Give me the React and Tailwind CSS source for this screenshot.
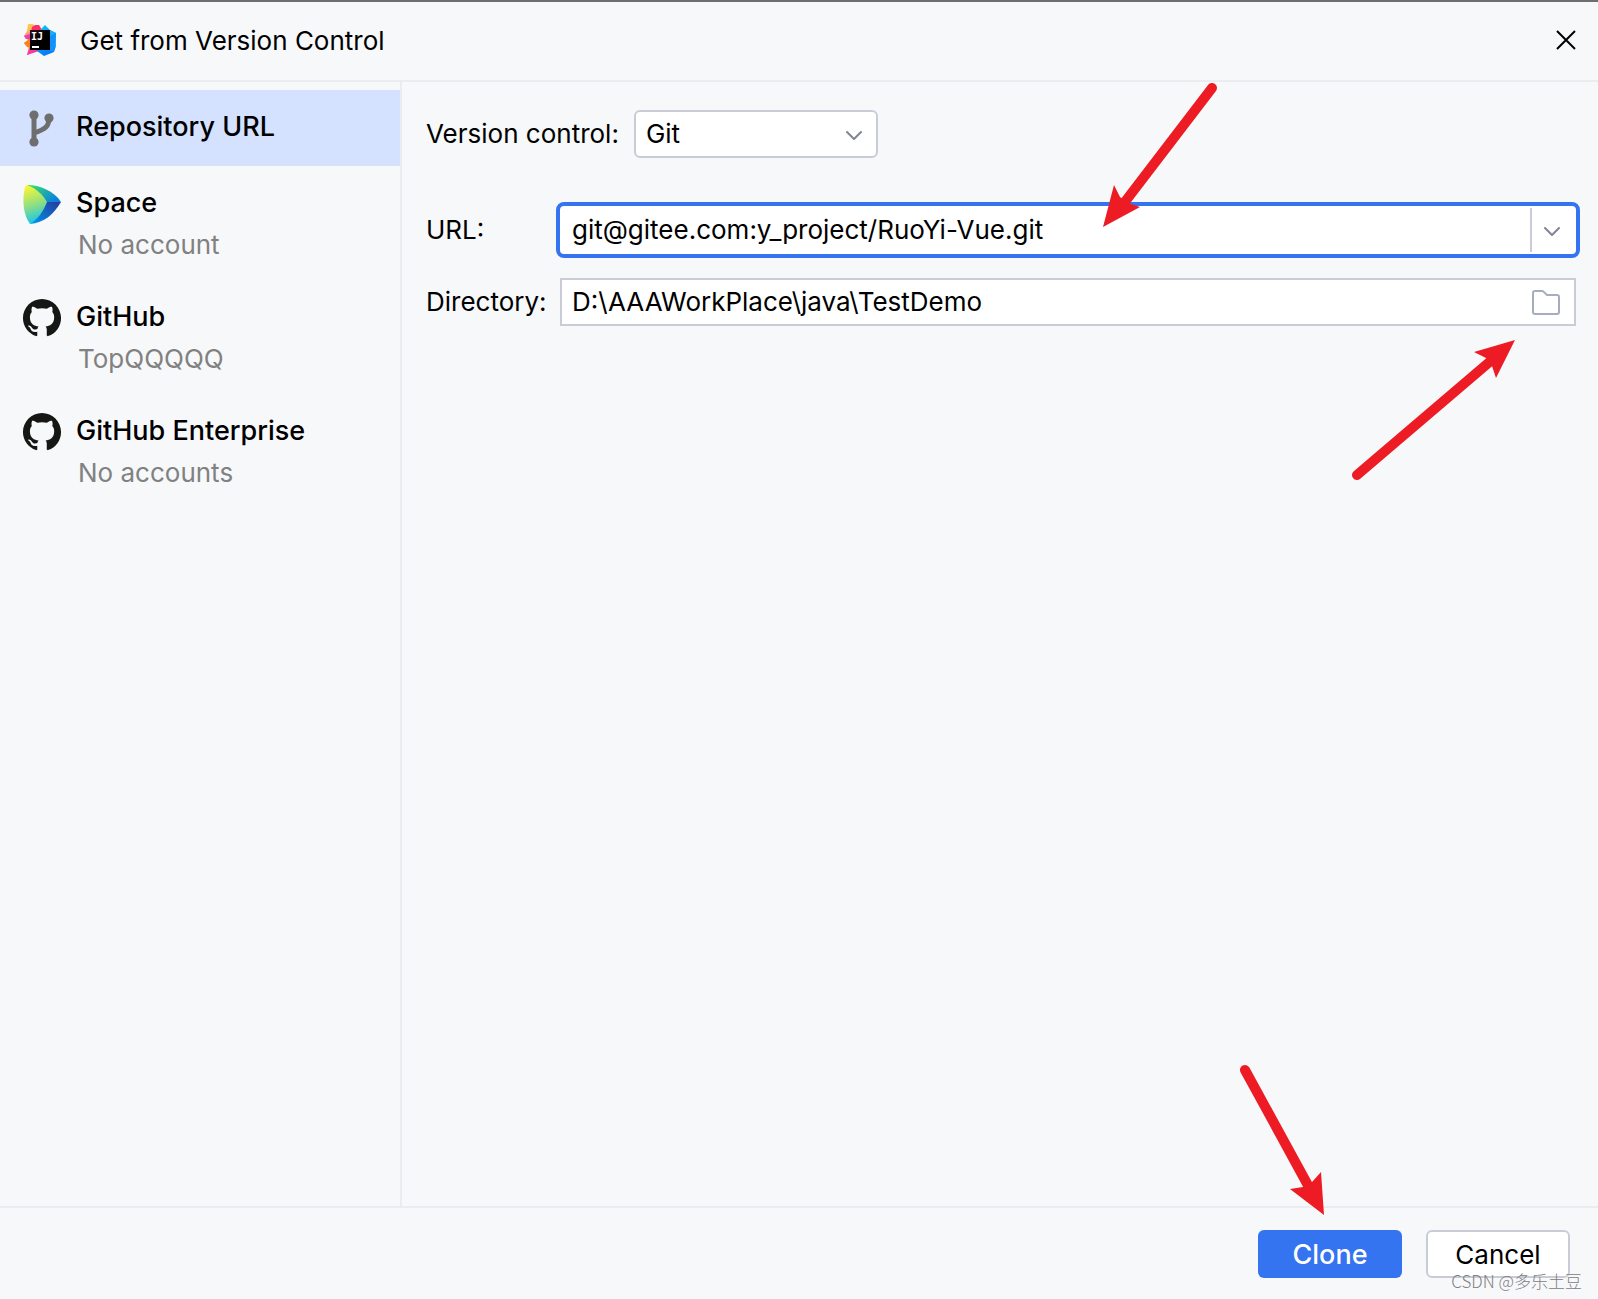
import React, { useState } from 'react';
import clsx from 'clsx';

function IdeaLogo() {
  return (
    <svg className="h-8 w-8 shrink-0" viewBox="0 0 32 32" aria-hidden="true">
      <defs>
        <linearGradient id="idea-warm" x1="0" y1="0" x2="0.3" y2="1">
          <stop offset="0" stopColor="#fcd84a" />
          <stop offset="0.3" stopColor="#fbb45c" />
          <stop offset="0.45" stopColor="#f765c8" />
          <stop offset="0.65" stopColor="#fd8224" />
          <stop offset="1" stopColor="#fe2f9c" />
        </linearGradient>
        <linearGradient id="idea-cool" x1="0" y1="0" x2="0.4" y2="1">
          <stop offset="0" stopColor="#10c4f8" />
          <stop offset="1" stopColor="#087cf8" />
        </linearGradient>
        <linearGradient id="idea-box" x1="0" y1="0" x2="1" y2="1">
          <stop offset="0" stopColor="#2a0f14" />
          <stop offset="0.5" stopColor="#000000" />
        </linearGradient>
      </defs>
      <path fill="url(#idea-warm)" d="M4 0h5l6 7v20L3 31l2-8-5-4 4-3-4-4 3-5z" />
      <path fill="#fe2d64" d="M8 3l3-2h4l3 5-1 3H7z" />
      <path fill="#f43ba8" d="M0 12l6-2v5H2z" />
      <path fill="#fc801d" d="M0 19l6-4v9l-3-1z" />
      <path fill="url(#idea-cool)" d="M16 6l5-5 5 5 6 3v13l-2 6-10 4-7-5z" />
      <path fill="#0bb5f5" d="M26 6l6 3v13l-6 4z" />
      <path fill="#1590fa" d="M26 12l6-3-2 19-6-2z" />
      <path fill="#f43ba8" d="M6 26h7l-10 5z" />
      <path fill="url(#idea-box)" d="M6 6h20v20H6z" />
      <text x="7" y="16" fill="#fff" fontFamily="'DejaVu Sans Mono', monospace" fontWeight="700" fontSize="10">IJ</text>
      <path fill="#fff" d="M8 22h7v2H8z" />
    </svg>
  );
}

function BranchIcon() {
  return (
    <svg className="h-10 w-10" viewBox="0 0 40 40" fill="none" aria-hidden="true">
      <path d="M12 6v27M27 9c0 8-3 11-15 15" stroke="#6e6e6e" strokeWidth="5" />
      <circle cx="12" cy="6" r="4.6" fill="#6e6e6e" />
      <circle cx="27" cy="9" r="4.6" fill="#6e6e6e" />
      <circle cx="12" cy="33" r="4.6" fill="#6e6e6e" />
    </svg>
  );
}

function SpaceIcon() {
  return (
    <svg className="h-10 w-10" viewBox="0 0 40 40" aria-hidden="true">
      <defs>
        <linearGradient id="space-left" x1="0.2" y1="0" x2="0.4" y2="1">
          <stop offset="0" stopColor="#fff82f" />
          <stop offset="0.5" stopColor="#97e07c" />
          <stop offset="1" stopColor="#14c5ec" />
        </linearGradient>
        <linearGradient id="space-top" x1="0" y1="0" x2="1" y2="0.6">
          <stop offset="0.1" stopColor="#35dd70" />
          <stop offset="1" stopColor="#0a80e0" />
        </linearGradient>
        <linearGradient id="space-bottom" x1="0" y1="1" x2="1" y2="0.2">
          <stop offset="0" stopColor="#08a0f4" />
          <stop offset="0.35" stopColor="#0a78d4" />
          <stop offset="1" stopColor="#2640a0" />
        </linearGradient>
      </defs>
      <path fill="url(#space-top)" d="M5 0C18 0 32 6 39 17H24z" />
      <path fill="url(#space-bottom)" d="M39 17C32 29 22 38 8 39L24 17z" />
      <path fill="url(#space-left)" d="M5 0C15 4 21 10 25 17C21 27 16 34 8 39C1 30 0 14 3 2Q4 0 5 0z" />
    </svg>
  );
}

function GitHubIcon() {
  return (
    <svg className="h-10 w-10" viewBox="-0.4 0.2 16.8 16.8" fill="#161614" aria-hidden="true">
      <path d="M8 .2C3.58.2 0 3.78 0 8.2c0 3.54 2.29 6.53 5.47 7.59.4.07.55-.17.55-.38 0-.19-.01-.82-.01-1.49-2.01.37-2.53-.49-2.69-.94-.09-.23-.48-.94-.82-1.13-.28-.15-.68-.52-.01-.53.63-.01 1.08.58 1.23.82.72 1.21 1.87.87 2.33.66.07-.52.28-.87.51-1.07-1.78-.2-3.64-.89-3.64-3.95 0-.87.31-1.59.82-2.15-.08-.2-.36-1.02.08-2.12 0 0 .67-.21 2.2.82.64-.18 1.32-.27 2-.27s1.36.09 2 .27c1.53-1.04 2.2-.82 2.2-.82.44 1.1.16 1.92.08 2.12.51.56.82 1.27.82 2.15 0 3.07-1.87 3.75-3.65 3.95.29.25.54.73.54 1.48 0 1.07-.01 1.93-.01 2.2 0 .21.15.46.55.38A8.01 8.01 0 0 0 16 8.2c0-4.42-3.58-8-8-8z" />
    </svg>
  );
}

function ChevronIcon({ className }) {
  return (
    <svg className={clsx('h-4 w-4', className)} viewBox="0 0 16 16" fill="none" stroke="#818594" strokeWidth="2" strokeLinecap="round" strokeLinejoin="round" aria-hidden="true">
      <path d="M1 6l7 7 7-7" />
    </svg>
  );
}

function FolderIcon() {
  return (
    <svg className="h-7 w-7" viewBox="0 0 28 28" fill="none" stroke="#a8adbd" strokeWidth="2" strokeLinejoin="round" aria-hidden="true">
      <path d="M1 5a2 2 0 0 1 2-2h7a2 2 0 0 1 1.500.6L15 7h10a2 2 0 0 1 2 2v15a2 2 0 0 1-2 2H3a2 2 0 0 1-2-2z" />
    </svg>
  );
}

const providers = [
  { id: 'url', name: 'Repository URL', icon: BranchIcon },
  { id: 'space', name: 'Space', account: 'No account', icon: SpaceIcon },
  { id: 'github', name: 'GitHub', account: 'TopQQQQQ', icon: GitHubIcon },
  { id: 'ghe', name: 'GitHub Enterprise', account: 'No accounts', icon: GitHubIcon },
];

export default function App() {
  const [selected, setSelected] = useState('url');
  const [url, setUrl] = useState('git@gitee.com:y_project/RuoYi-Vue.git');
  const [directory, setDirectory] = useState('D:\\AAAWorkPlace\\java\\TestDemo');

  return (
    <div className="relative flex min-h-screen flex-col overflow-hidden border-t-2 border-[#6e6e70] bg-[#f7f8fa] font-['Inter','Noto_Sans_CJK_SC',sans-serif] text-[26px] leading-8 text-black">
      {/* Title bar */}
      <header className="flex h-20 items-center border-b-2 border-[#ebecf0] pr-[18px] pb-0.5 pl-6">
        <IdeaLogo />
        <h1 className="ml-6 flex-1 pt-0.5">Get from Version Control</h1>
        <button type="button" aria-label="Close" className="p-1">
          <svg className="h-5 w-5" viewBox="0 0 20 20" stroke="#000" strokeWidth="2" aria-hidden="true">
            <path d="M1 1l18 18M19 1L1 19" />
          </svg>
        </button>
      </header>

      <div className="flex flex-1">
        {/* Providers */}
        <nav className="w-[402px] shrink-0 border-r-2 border-[#ebecf0] pt-2">
          {providers.map(({ id, name, account, icon: Icon }) => (
            <button
              key={id}
              type="button"
              onClick={() => setSelected(id)}
              className={clsx(
                'flex w-full items-start gap-3.5 pt-[19px] pl-[22px] text-left',
                account ? 'h-[114px]' : 'h-[76px]',
                selected === id && 'bg-[#d4e2ff]'
              )}
            >
              <Icon />
              <span className="flex flex-col gap-2.5 pt-0.5">
                <span className="text-[27px] font-medium">{name}</span>
                {account && <span className="pl-0.5 text-[#818181]">{account}</span>}
              </span>
            </button>
          ))}
        </nav>

        {/* Clone form */}
        <main className="min-w-0 flex-1 pt-7 pr-[18px] pl-6">
          <div className="flex items-center gap-[15px]">
            <label htmlFor="vcs">Version control:</label>
            <div className="relative">
              <select
                id="vcs"
                className="h-12 w-[244px] appearance-none rounded-md border-2 border-[#c9ccd6] bg-white pl-2.5"
              >
                <option>Git</option>
              </select>
              <ChevronIcon className="pointer-events-none absolute top-4 right-4" />
            </div>
          </div>

          <div className="mt-11 flex items-center">
            <label htmlFor="url" className="w-[130px] shrink-0">URL:</label>
            <div className="flex h-14 min-w-0 flex-1 items-center rounded-lg border-4 border-[#3574f0] bg-white">
              <input
                id="url"
                type="text"
                value={url}
                onChange={(e) => setUrl(e.target.value)}
                className="h-full min-w-0 flex-1 pb-0.5 pl-3 outline-none"
              />
              <button type="button" aria-label="Recent URLs" className="flex h-11 w-[46px] items-center justify-center border-l-2 border-[#c9ccd6] pr-1">
                <ChevronIcon />
              </button>
            </div>
          </div>

          <div className="mt-5 flex items-center pr-1">
            <label htmlFor="directory" className="w-[134px] shrink-0">Directory:</label>
            <div className="flex h-12 min-w-0 flex-1 items-center border-2 border-[#c9ccd6] bg-white pr-3.5">
              <input
                id="directory"
                type="text"
                value={directory}
                onChange={(e) => setDirectory(e.target.value)}
                className="h-full min-w-0 flex-1 pb-0.5 pl-2.5 outline-none"
              />
              <button type="button" aria-label="Browse">
                <FolderIcon />
              </button>
            </div>
          </div>
        </main>
      </div>

      <footer className="flex h-[93px] items-start justify-end gap-6 border-t-2 border-[#ebecf0] pt-[22px] pr-7">
        <button type="button" className="h-12 w-36 rounded-md bg-[#3574f0] pt-0.5 text-[27px] font-medium text-white">Clone</button>
        <button type="button" className="h-12 w-36 rounded-md border-2 border-[#c9ccd6] bg-white pt-0.5">Cancel</button>
      </footer>

      {/* Pointer arrows */}
      <svg className="pointer-events-none absolute top-[78px] right-[378px] h-[152px] w-[120px]" viewBox="0 0 120 152" aria-hidden="true">
        <path d="M112 8L21 127" stroke="#ed1c24" strokeWidth="10" strokeLinecap="round" />
        <path fill="#ed1c24" d="M3 147L14 105L20 117L28 123L40 127z" />
      </svg>
      <svg className="pointer-events-none absolute top-[338px] right-[78px] h-[144px] w-[170px]" viewBox="0 0 170 144" aria-hidden="true">
        <path d="M7 135L143 19" stroke="#ed1c24" strokeWidth="10" strokeLinecap="round" />
        <path fill="#ed1c24" d="M165 0L124 12L136 18L142 26L146 38z" />
      </svg>
      <svg className="pointer-events-none absolute right-[268px] bottom-[84px] h-[152px] w-[92px]" viewBox="0 0 92 152" aria-hidden="true">
        <path d="M7 7L72 126" stroke="#ed1c24" strokeWidth="10" strokeLinecap="round" />
        <path fill="#ed1c24" d="M86 152L52 126L65 124L74 119L83 109z" />
      </svg>

      <span className="pointer-events-none absolute right-4 bottom-1.5 font-['Noto_Sans_CJK_SC',sans-serif] text-[17px] leading-6 font-light text-[#808082]">
        CSDN @多乐土豆
      </span>
    </div>
  );
}
